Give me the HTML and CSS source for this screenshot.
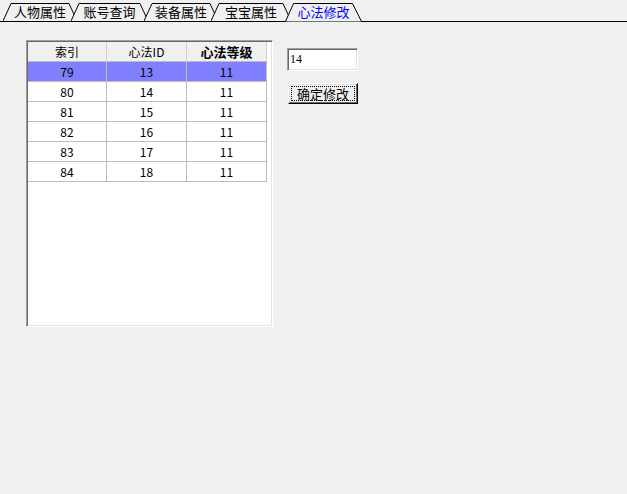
FILE: index.html
```html
<!DOCTYPE html>
<html lang="zh-CN">

<head>
    <meta charset="UTF-8">
    <title>心法修改</title>
    <link rel="stylesheet" href="styles.css">
</head>

<body>

    <!-- Tab strip -->
    <div class="tabs">
        <div class="tab tab-1">
            <svg class="tab-shape" width="74" height="18"><polyline points="0,18 8,0.5 66,0.5 74,18" /></svg>
            <span class="tab-label">人物属性</span>
        </div>
        <div class="tab tab-2">
            <svg class="tab-shape" width="77" height="18"><polyline points="0,18 8,0.5 69,0.5 77,18" /></svg>
            <span class="tab-label">账号查询</span>
        </div>
        <div class="tab tab-3">
            <svg class="tab-shape" width="74" height="18"><polyline points="0,18 8,0.5 66,0.5 74,18" /></svg>
            <span class="tab-label">装备属性</span>
        </div>
        <div class="tab tab-4">
            <svg class="tab-shape" width="80" height="18"><polyline points="0,18 8,0.5 72,0.5 80,18" /></svg>
            <span class="tab-label">宝宝属性</span>
        </div>
        <div class="tab tab-5 active">
            <svg class="tab-shape" width="77" height="19"><polyline points="0.5,18.5 8.5,0.5 67.5,0.5 76.5,18.5" /></svg>
            <span class="tab-label">心法修改</span>
        </div>
    </div>

    <div class="main">
        <!-- List of skills -->
        <div class="list">
            <div class="row head">
                <div class="cell">索引</div>
                <div class="cell">心法ID</div>
                <div class="cell bold">心法等级</div>
            </div>
            <div class="row selected">
                <div class="cell">79</div>
                <div class="cell">13</div>
                <div class="cell">11</div>
            </div>
            <div class="row">
                <div class="cell">80</div>
                <div class="cell">14</div>
                <div class="cell">11</div>
            </div>
            <div class="row">
                <div class="cell">81</div>
                <div class="cell">15</div>
                <div class="cell">11</div>
            </div>
            <div class="row">
                <div class="cell">82</div>
                <div class="cell">16</div>
                <div class="cell">11</div>
            </div>
            <div class="row">
                <div class="cell">83</div>
                <div class="cell">17</div>
                <div class="cell">11</div>
            </div>
            <div class="row">
                <div class="cell">84</div>
                <div class="cell">18</div>
                <div class="cell">11</div>
            </div>
        </div>

        <!-- Edit panel -->
        <div class="side">
            <input type="text" class="edit" value="14">
            <button class="btn"><span class="focus">确定修改</span></button>
        </div>
    </div>

</body>

</html>
```

FILE: styles.css
```css
* {
    margin: 0;
    padding: 0;
    box-sizing: border-box;
}

body {
    background: #f0f0f0;
    font-family: "Noto Sans CJK SC", "Noto Sans", sans-serif;
    font-size: 12px;
    color: #000;
    width: 627px;
    height: 494px;
    overflow: hidden;
}

/* Tabs */
.tabs {
    display: flex;
    align-items: flex-start;
    height: 22px;
    padding: 3px 0 0 3px;
    border-bottom: 1px solid #000;
}

.tab {
    position: relative;
    height: 18px;
}

.tab-1 { width: 74px; }
.tab-2 { width: 77px; margin-left: -6px; }
.tab-3 { width: 74px; margin-left: -4px; }
.tab-4 { width: 80px; margin-left: -7px; }
.tab-5 { width: 77px; margin-left: -6px; }

.tab-shape {
    position: absolute;
    left: 0;
    top: 0;
    display: block;
}

.tab-shape polyline {
    fill: #f0f0f0;
    stroke: #000;
    stroke-width: 1;
}

.tab.active {
    height: 19px;
    z-index: 2;
}

.tab-label {
    position: relative;
    display: block;
    text-align: center;
    line-height: 18px;
    font-size: 13px;
    white-space: nowrap;
}

.tab.active .tab-label {
    color: #0000ff;
}

/* Main area */
.main {
    display: flex;
    align-items: flex-start;
    padding: 18px 0 0 26px;
}

.list {
    width: 247px;
    height: 287px;
    background: #fff;
    border: 1px solid;
    border-color: #a0a0a0 #fff #fff #a0a0a0;
    box-shadow: inset 1px 1px 0 #696969, inset -1px -1px 0 #e3e3e3;
    padding: 1px;
}

.row {
    display: grid;
    grid-template-columns: 79px 80px 80px;
}

.cell {
    height: 20px;
    line-height: 19px;
    text-align: center;
    border-right: 1px solid #bcbcbc;
    border-bottom: 1px solid #bcbcbc;
    white-space: nowrap;
}

.head .cell {
    background: #f0f0f0;
    border-color: #d0d0d0;
    border-bottom-color: #bcbcbc;
    font-size: 12px;
}

.head .cell.bold {
    font-weight: bold;
    font-size: 13px;
}

.selected .cell {
    background: #8080ff;
}

/* Edit panel */
.side {
    display: flex;
    flex-direction: column;
    align-items: flex-start;
    margin: 8px 0 0 14px;
}

.edit {
    width: 71px;
    height: 23px;
    background: #fff;
    border: 1px solid;
    border-color: #a0a0a0 #fff #fff #a0a0a0;
    box-shadow: inset 1px 1px 0 #696969, inset -1px -1px 0 #e3e3e3;
    padding: 0 2px;
    font-family: "Liberation Serif", serif;
    font-size: 12px;
    outline: none;
}

.btn {
    width: 70px;
    height: 21px;
    margin: 12px 0 0 1px;
    background: #f0f0f0;
    border: 1px solid;
    border-color: #fff #000 #000 #fff;
    box-shadow: inset -1px -1px 0 #696969, inset 1px 1px 0 #e3e3e3;
    padding: 2px;
    font-family: "Noto Sans CJK SC", sans-serif;
    font-size: 13px;
    color: #000;
}

.btn .focus {
    display: block;
    height: 15px;
    line-height: 13px;
    border: 1px dotted #000;
}
```
